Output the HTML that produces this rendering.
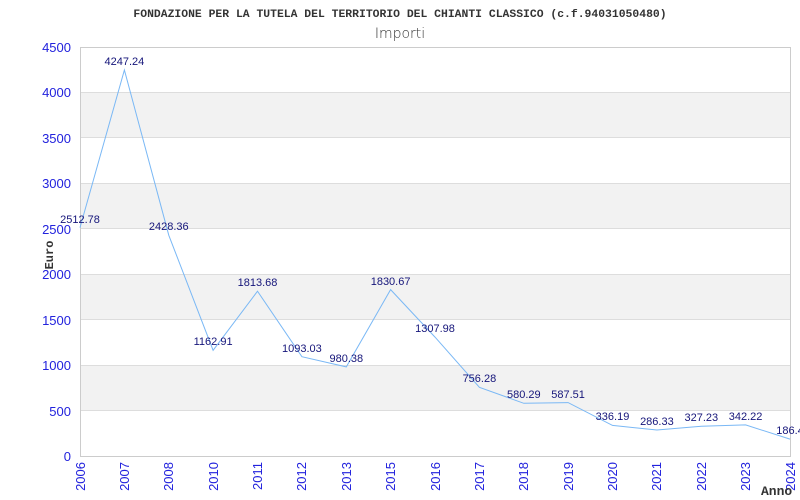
<!DOCTYPE html>
<html><head><meta charset="utf-8"><style>body{margin:0;background:#fff}svg{display:block}</style></head><body>
<svg width="800" height="500" xmlns="http://www.w3.org/2000/svg">
<rect width="800" height="500" fill="#fff"/>
<text x="400" y="17" text-anchor="middle" font-family="Liberation Mono, monospace" font-weight="bold" font-size="11.4" fill="#333">FONDAZIONE PER LA TUTELA DEL TERRITORIO DEL CHIANTI CLASSICO (c.f.94031050480)</text>
<text x="400" y="38" text-anchor="middle" font-family="DejaVu Sans, sans-serif" font-size="14" fill="#333" font-weight="300">Importi</text>
<g fill="#f2f2f2">
<rect x="80" y="365.1" width="710" height="45.4"/>
<rect x="80" y="274.2" width="710" height="45.5"/>
<rect x="80" y="183.3" width="710" height="45.5"/>
<rect x="80" y="92.4" width="710" height="45.5"/>
</g>
<g stroke="#ddd" stroke-width="1">
<line x1="80" y1="410.5" x2="790" y2="410.5"/><line x1="80" y1="365.5" x2="790" y2="365.5"/>
<line x1="80" y1="319.5" x2="790" y2="319.5"/><line x1="80" y1="274.5" x2="790" y2="274.5"/>
<line x1="80" y1="228.5" x2="790" y2="228.5"/><line x1="80" y1="183.5" x2="790" y2="183.5"/>
<line x1="80" y1="137.5" x2="790" y2="137.5"/><line x1="80" y1="92.5" x2="790" y2="92.5"/>
<line x1="80" y1="47.5" x2="790" y2="47.5"/>
</g>
<rect x="80.5" y="47.5" width="710" height="409" fill="none" stroke="#ccc"/>
<g font-family="Liberation Sans, sans-serif" font-size="13" fill="#22d" text-anchor="end">
<text x="71" y="52">4500</text><text x="71" y="97">4000</text><text x="71" y="143">3500</text>
<text x="71" y="188">3000</text><text x="71" y="234">2500</text><text x="71" y="279">2000</text>
<text x="71" y="325">1500</text><text x="71" y="370">1000</text><text x="71" y="416">500</text>
<text x="71" y="461">0</text>
</g>
<text transform="translate(53,255) rotate(-90)" text-anchor="middle" font-family="Liberation Mono, monospace" font-weight="bold" font-size="12" fill="#333">Euro</text>
<g font-family="Liberation Sans, sans-serif" font-size="13" fill="#22d" text-anchor="end">
<text transform="translate(85,462) rotate(-90)">2006</text>
<text transform="translate(129,462) rotate(-90)">2007</text>
<text transform="translate(173,462) rotate(-90)">2008</text>
<text transform="translate(218,462) rotate(-90)">2010</text>
<text transform="translate(262,462) rotate(-90)">2011</text>
<text transform="translate(306,462) rotate(-90)">2012</text>
<text transform="translate(351,462) rotate(-90)">2013</text>
<text transform="translate(395,462) rotate(-90)">2015</text>
<text transform="translate(440,462) rotate(-90)">2016</text>
<text transform="translate(484,462) rotate(-90)">2017</text>
<text transform="translate(528,462) rotate(-90)">2018</text>
<text transform="translate(573,462) rotate(-90)">2019</text>
<text transform="translate(617,462) rotate(-90)">2020</text>
<text transform="translate(661,462) rotate(-90)">2021</text>
<text transform="translate(706,462) rotate(-90)">2022</text>
<text transform="translate(750,462) rotate(-90)">2023</text>
<text transform="translate(795,462) rotate(-90)">2024</text>
</g>
<text x="761" y="495" font-family="Liberation Mono, monospace" font-weight="bold" font-size="13" fill="#333">Anno</text>
<polyline fill="none" stroke="#7ab8f5" stroke-width="1" points="80,227.6 124.4,70 168.8,235.3 213.1,350.3 257.5,291.2 301.9,356.7 346.3,366.9 390.6,289.6 435,337.1 479.4,387.3 523.8,403.3 568.1,402.6 612.5,425.4 656.9,430 701.3,426.3 745.6,424.9 790,439.1"/>
<g font-family="Liberation Sans, sans-serif" font-size="11" fill="#15157a" text-anchor="middle">
<text x="80" y="223">2512.78</text>
<text x="124.4" y="65">4247.24</text>
<text x="168.8" y="230">2428.36</text>
<text x="213.1" y="345">1162.91</text>
<text x="257.5" y="286">1813.68</text>
<text x="301.9" y="352">1093.03</text>
<text x="346.3" y="362">980.38</text>
<text x="390.6" y="285">1830.67</text>
<text x="435" y="332">1307.98</text>
<text x="479.4" y="382">756.28</text>
<text x="523.8" y="398">580.29</text>
<text x="568.1" y="398">587.51</text>
<text x="612.5" y="420">336.19</text>
<text x="656.9" y="425">286.33</text>
<text x="701.3" y="421">327.23</text>
<text x="745.6" y="420">342.22</text>
<text x="790" y="434">186.4</text>
</g>
</svg>
</body></html>
